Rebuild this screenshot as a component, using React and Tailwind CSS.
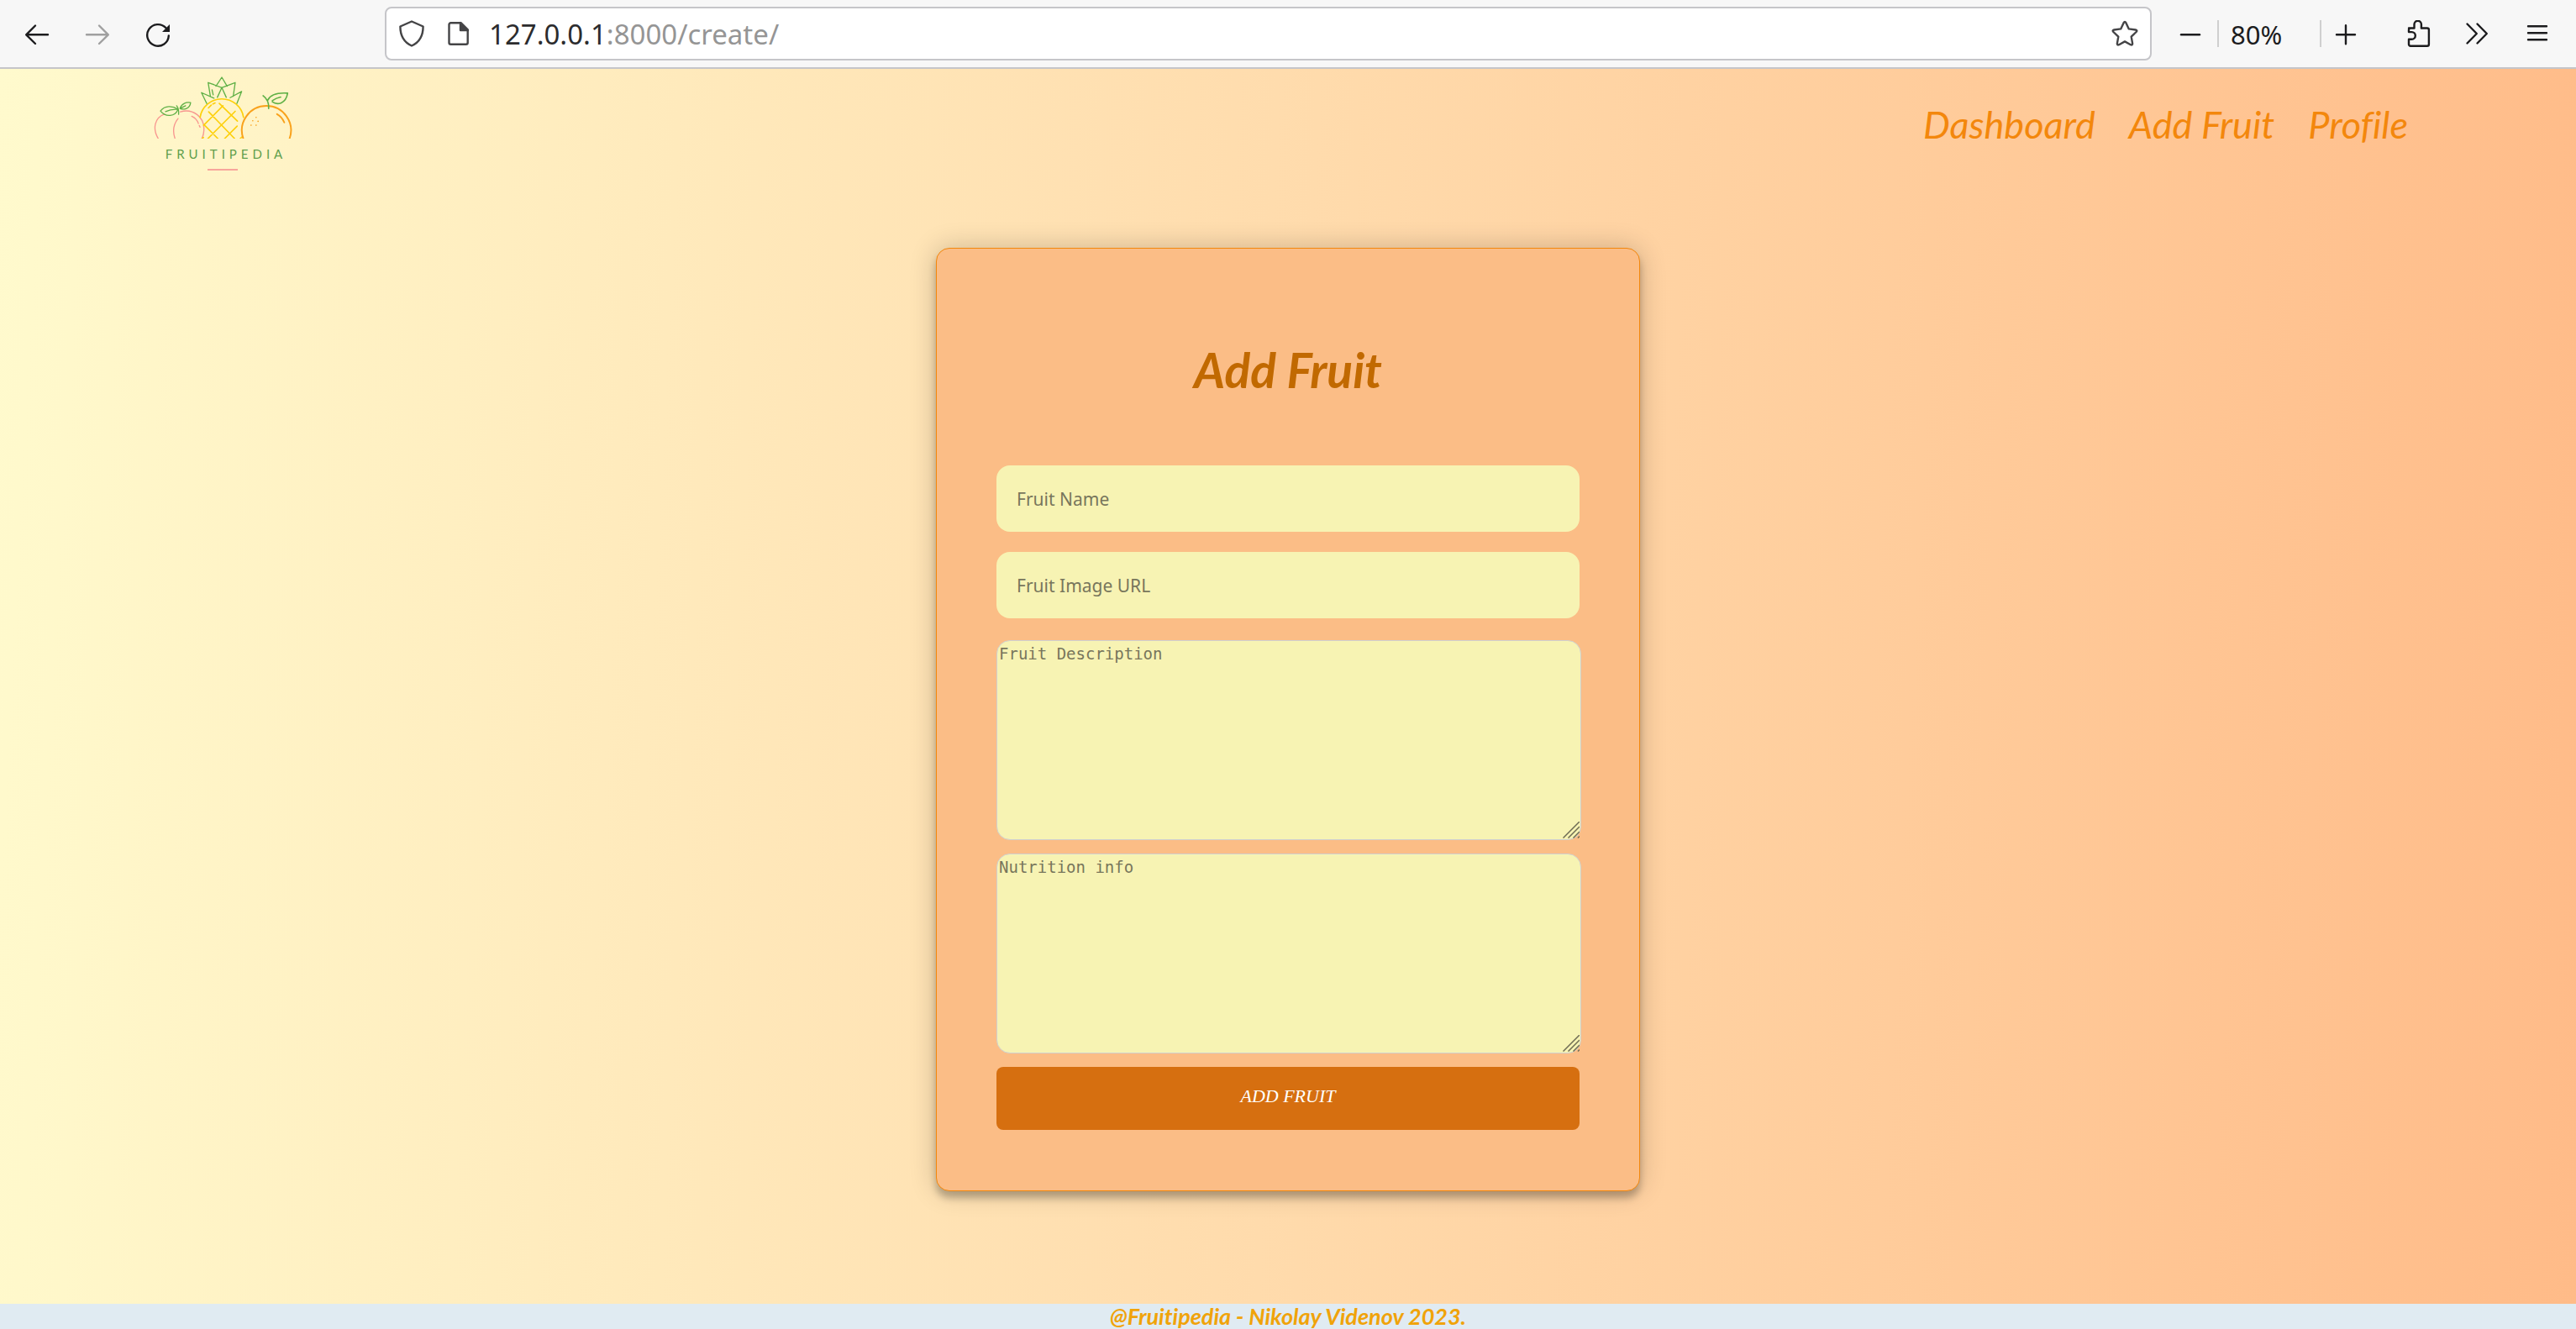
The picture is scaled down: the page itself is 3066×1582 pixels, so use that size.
import React from "react";

function IconButton({ label, children, className = "", disabled = false }) {
  return (
    <button
      type="button"
      aria-label={label}
      disabled={disabled}
      className={`flex size-8 shrink-0 items-center justify-center ${className}`}
    >
      <svg
        viewBox="0 0 32 32"
        className="size-8"
        fill="none"
        stroke="currentColor"
        strokeWidth="2.4"
        strokeLinecap="round"
        strokeLinejoin="round"
        aria-hidden="true"
      >
        {children}
      </svg>
    </button>
  );
}

function BrowserBar() {
  return (
    <div className="flex items-center border-b-2 border-[#c5c5c9] bg-[#f7f7f7] py-2 pr-[30px] pl-7 font-['Noto_Sans',sans-serif] text-[#1c1c1e]">
      <div className="flex w-[430px] shrink-0 items-center gap-10">
        <IconButton label="Back">
          <path d="M29 17.3H3.5M14 6.5 3.2 17.3 14 28" />
        </IconButton>
        <IconButton label="Forward" disabled className="text-[#a0a0a0]">
          <path d="M3 17.3h25.500M18 6.500 28.800 17.300 18 28" />
        </IconButton>
        <IconButton label="Reload">
          <path d="M28.800 18.500A12.800 12.800 0 1 1 25.500 9.300" />
          <path d="M30 5v9h-9z" fill="currentColor" stroke="none" />
        </IconButton>
      </div>

      <div className="flex h-16 grow items-center rounded-lg border-2 border-[#c5c5c9] bg-white px-[14px] text-[#444446]">
        <IconButton label="Tracking protection">
          <path d="M16 1.500 29.600 7.500C29.600 18 26 26 16 30.500 6 26 2.400 18 2.400 7.500Z" />
        </IconButton>
        <IconButton label="Site information" className="ml-[22px]">
          <path d="M8.500 3.300h12.200l8 8V26.700a2 2 0 0 1-2 2H8.500a2 2 0 0 1-2-2V5.300a2 2 0 0 1 2-2Z" />
          <path d="M20 3v9h9z" fill="currentColor" />
        </IconButton>
        <div
          role="textbox"
          aria-label="Address"
          tabIndex={0}
          className="ml-[22px] grow pt-0.5 text-[33px] leading-10 text-[#959595]"
        >
          <span className="text-[#2c2c2e]">127.0.0.1</span>:8000/create/
        </div>
        <IconButton label="Bookmark this page">
          <path d="M14.600 3.200q1.400-2.400 2.800 0l3.400 7.200 8 1.100q2.500.6.800 2.500l-5.900 5.600 1.400 8q.2 2.500-2.200 1.600L16 25.400l-6.900 3.800q-2.400.9-2.200-1.600l1.400-8L2.400 14q-1.700-1.900.8-2.500l8-1.100z" />
        </IconButton>
      </div>

      <div className="flex shrink-0 items-center">
        <IconButton label="Zoom out" className="ml-[30px]">
          <path d="M5 17.300h22" />
        </IconButton>
        <div className="ml-4 flex h-8 w-[124px] items-center border-x-2 border-[#cfcfcf] pl-3.5">
          <button type="button" aria-label="Reset zoom level" className="pt-0.5 text-[31px] leading-8">
            80%
          </button>
        </div>
        <IconButton label="Zoom in" className="ml-[13px]">
          <path d="M5 17.300h22M16 6.300v22" />
        </IconButton>
        <IconButton label="Extensions" className="ml-[54px]">
          <path d="M5 9.500h6.500V5a4.200 4.200 0 0 1 8.400 0v4.500h7a2 2 0 0 1 2 2V28.700a2 2 0 0 1-2 2H7a2 2 0 0 1-2-2v-6h3.500a4.300 4.300 0 0 0 0-8.600H5V11.500a2 2 0 0 1 2-2" />
        </IconButton>
        <IconButton label="More tools" className="ml-[38px]">
          <path d="M4.500 4.500 15.800 16 4.500 27.500M16.500 4.500 27.800 16 16.500 27.500" />
        </IconButton>
        <IconButton label="Application menu" className="ml-10">
          <path d="M5 7.300h22M5 15.300h22M5 23.300h22" />
        </IconButton>
      </div>
    </div>
  );
}

function Logo() {
  return (
    <a href="#home" aria-label="Fruitipedia home" className="flex w-[170px] flex-col items-center">
      <svg
        viewBox="90 60 510 226"
        className="h-[75px] w-[170px]"
        fill="none"
        strokeWidth="4"
        strokeLinecap="round"
        strokeLinejoin="round"
        aria-hidden="true"
      >
        <g stroke="#f8968f">
          <path d="M114 286C92 250 102 210 136 198" />
          <path d="M193 190C240 176 278 210 278 250q0 22-8 36" />
          <path d="M185 214C164 240 168 268 174 286" />
          <path d="M234 206q18 8 24 26M261 239l3 6" />
        </g>
        <g stroke="#fdd00c" strokeWidth="5">
          <path d="M264 210A79 79 0 0 1 420 210" />
          <path d="M333 160 398 223M295 190 388 286M278 236 328 286M346 168 277 238M390 188 292 286M397 241 352 286M408 286l6-6M272 286l4-4" />
          <path d="M294 176l10-10M310 162l8-4" />
        </g>
        <g stroke="#f9a21c" strokeWidth="5">
          <path d="M419 286A88 88 0 1 1 585 286" strokeWidth="6" />
          <path d="M540 198q18 10 26 30" strokeWidth="6" />
          <path d="M465 210h.1M453 222h.1M472 224h.1M447 238h.1M465 238h.1" />
        </g>
        <g stroke="#5fb046">
          <path d="M122 187C138 166 165 168 185 181 174 207 142 211 122 187ZM140 189q20-10 45-8M180 168q9 12 7 31" />
          <path d="M192 178C197 160 215 154 230 157 228 178 206 184 192 178ZM192 178l20-10" />
          <path d="M321 98 342 66 361 98M342 103 293 85 301 134M342 103 326 138M342 103 390 85 383 134M342 103 358 138M288 160 269 121 314 141M396 160 413 117 372 139M307 111l4 18" />
          <path d="M490 132q22 16 20 46M507 148C518 124 546 121 578 123 572 160 542 168 523 154M523 150q14-10 30-13" strokeWidth="5" />
        </g>
      </svg>
      <span className="mt-2 pl-2 font-['Lato',sans-serif] text-[15px] leading-5 tracking-[5px] text-[#5f9f4c]">
        FRUITIPEDIA
      </span>
      <span className="mt-2 h-0.5 w-9 bg-[#f8a69c]" />
    </a>
  );
}

const fieldClass =
  "h-[79px] w-full rounded-2xl bg-[#f7f3b3] px-6 font-['Noto_Sans',sans-serif] text-[21px] text-[#555] outline-none placeholder:text-[#78765c]";

function NotesField({ id, label }) {
  return (
    <div className="relative -mr-0.5">
      <textarea
        id={id}
        aria-label={label}
        placeholder={label}
        className="block h-[238px] w-full resize-none rounded-2xl border border-[#cfcfcf] bg-[#f7f3b3] px-0.5 py-[3px] font-['DejaVu_Sans_Mono',monospace] text-[19px] leading-6 text-[#555] outline-none placeholder:text-[#78765c]"
      />
      <svg
        viewBox="0 0 20 20"
        className="pointer-events-none absolute right-0.5 bottom-0.5 size-5"
        stroke="#6f6c54"
        strokeWidth="1.5"
        aria-hidden="true"
      >
        <path d="M.5 19.500 20 0M6.500 19.500 20 6M12.500 19.500 20 12M18 19.500l2-2" />
      </svg>
    </div>
  );
}

export default function App() {
  return (
    <div className="flex min-h-screen flex-col">
      <BrowserBar />
      <div className="flex grow flex-col bg-[linear-gradient(93deg,#fffacd,#ffdbac,#ffbb88)]">
        <header className="flex items-center justify-between pt-2 pr-[200px] pl-[180px]">
          <Logo />
          <nav className="flex gap-10 pt-0.5 font-['Lato',sans-serif] text-[45px] leading-[50px] text-[#f3870c] italic [font-variant-ligatures:none]">
            <a href="#dashboard">Dashboard</a>
            <a href="#create">Add Fruit</a>
            <a href="#profile">Profile</a>
          </nav>
        </header>

        <main className="flex grow justify-center pt-[92px] pb-[134px]">
          <form
            className="flex w-[838px] flex-col rounded-2xl border border-[#f3870c] bg-[#fbbd86] px-[71px] pb-[71px] shadow-[0_0_32px_rgba(0,0,0,0.2),0_8px_8px_rgba(0,0,0,0.24)]"
            onSubmit={(e) => e.preventDefault()}
          >
            <h1 className="mt-[112px] mb-[82px] text-center font-['Lato',sans-serif] text-[57px] leading-16 font-bold text-[#c16900] italic">
              Add Fruit
            </h1>
            <input type="text" aria-label="Fruit Name" placeholder="Fruit Name" className={fieldClass} />
            <input
              type="url"
              aria-label="Fruit Image URL"
              placeholder="Fruit Image URL"
              className={`mt-6 ${fieldClass}`}
            />
            <div className="mt-[26px] flex flex-col gap-4">
              <NotesField id="description" label="Fruit Description" />
              <NotesField id="nutrition" label="Nutrition info" />
              <button
                type="submit"
                className="h-[75px] rounded-lg bg-[#d66f10] pb-1.5 font-['Liberation_Serif',serif] text-[22px] text-white italic"
              >
                ADD FRUIT
              </button>
            </div>
          </form>
        </main>
      </div>
      <footer className="bg-[#e0ebf2] text-center font-['Lato',sans-serif] text-[27px] leading-[30px] font-bold text-[#f0a30a] italic [font-variant-ligatures:none]">
        @Fruitipedia - Nikolay Videnov 2023.
      </footer>
    </div>
  );
}
